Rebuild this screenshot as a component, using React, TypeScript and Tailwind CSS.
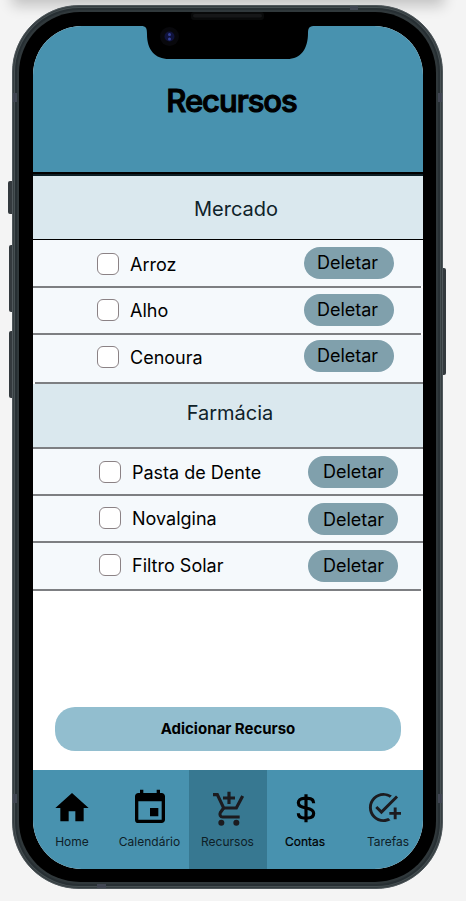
import { MdHome, MdEvent, MdAddTask } from "react-icons/md";
import type { ReactNode } from "react";

type RowProps = { label: string; height: string; offset: string; check: string; text: string; button: string; buttonText: string };

function Row({ label, height, offset, check, text, button, buttonText }: RowProps) {
  return (
    <div className={`flex items-start bg-[#f5f9fc] ${height} ${offset}`}>
      <span className={`h-[22px] w-[22px] shrink-0 rounded-[6px] border border-[#8b8285] bg-white ${check}`} />
      <span className={`ml-[11px] flex-1 whitespace-nowrap text-[18px] leading-[22px] ${text}`}>{label}</span>
      <button className={`h-8 w-[90px] shrink-0 rounded-full bg-[#80a0ac] text-[18px] leading-[22px] ${button} ${buttonText}`}>
        Deletar
      </button>
    </div>
  );
}

function Line({ inset = "" }: { inset?: string }) {
  return <div className={`h-[2px] ${inset}`}><div className="h-full bg-[#7d7f82]" /></div>;
}

function CartPlus() {
  return (
    <svg className="h-10 w-[46px]" viewBox="0 14 138 120" fill="none" stroke="#1c1b1f" strokeWidth="9.500">
      <path d="M24 34H37L56 74H94L113 38" />
      <path d="M56 74L46 88C43 94 46 101 53 101H104" />
      <path d="M54 44H90M72 25V62" />
      <circle cx="49" cy="118" r="9" fill="#1c1b1f" stroke="none" />
      <circle cx="94" cy="118" r="9" fill="#1c1b1f" stroke="none" />
    </svg>
  );
}

function Dollar() {
  return (
    <svg className="h-10 w-8" viewBox="0 20 96 120" fill="none" stroke="#000" strokeWidth="9.500">
      <path d="M48 39V123" />
      <path d="M71 66C71 55 64 51 54 51H42C31 51 25 57 25 64C25 74 33 77 48 80C64 83 71 87 71 96C71 105 64 110 54 110H42C31 110 25 105 25 96" />
    </svg>
  );
}

function Tab({ icon, label, active, labelClass = "text-[#0e2027]" }: { icon: ReactNode; label: string; active?: boolean; labelClass?: string }) {
  return (
    <div className={`flex w-[78px] shrink-0 flex-col items-center pt-[18px] text-[12px] leading-[15px] ${active ? "bg-[#377891]" : ""}`}>
      <div className="flex h-10 items-center justify-center">{icon}</div>
      <span className={`mt-[6px] whitespace-nowrap ${labelClass}`}>{label}</span>
    </div>
  );
}

export default function App() {
  return (
    <div className="relative h-[901px] w-[466px] overflow-hidden bg-[#f4f4f4] font-['Inter',sans-serif] text-black">
      <div className="absolute -top-5 left-4 h-5 w-[424px] shadow-[0_2px_14px_4px_rgba(0,0,0,0.2)]" />
      <div className="absolute left-2 top-[181px] h-[33px] w-2 rounded-l-[2px] bg-[#343a3e]" />
      <div className="absolute left-[9px] top-[245px] h-[67px] w-2 rounded-l-[2px] bg-[#343a3e]" />
      <div className="absolute left-[9px] top-[331px] h-[67px] w-2 rounded-l-[2px] bg-[#343a3e]" />
      <div className="absolute left-[440px] top-[268px] h-[107px] w-[6px] rounded-r-[2px] bg-[#343a3e]" />
      <div className="relative ml-3 h-[901px] w-[431px] pt-[5px]">
        <div className="relative h-[884px] rounded-[67px] border border-[#4f575b] bg-[#30383b] p-[6px] shadow-[inset_0_0_0_1px_#353d40,inset_0_0_0_2px_#464f52,inset_0_0_0_4px_#272f33]">
          <div className="h-[870px] w-[417px] rounded-[61px] bg-black py-[14px] pl-[14px] pr-[13px]">
            <div className="flex h-[843px] w-[390px] flex-col overflow-hidden rounded-[49px] bg-white">
              <header className="h-[146px] shrink-0 bg-[#4892af] pt-[55px] text-center">
                <h1 className="ml-[7px] text-[31px] font-medium leading-[39px] tracking-[-1px] [-webkit-text-stroke:1.1px_black]">Recursos</h1>
              </header>
              <div className="h-[4px] shrink-0 border-t-2 border-black bg-[#0c1f26]" />
              <h2 className="h-[63px] shrink-0 bg-[#dae8ee] pl-4 pt-[21px] text-center text-[20px] leading-[24px] text-[#0f2229]">Mercado</h2>
              <div className="h-px shrink-0 bg-black" />
              <Row label="Arroz" height="h-[46px]" offset="pl-16 pr-[29px]" check="mt-[13px]" text="mt-[14px]" button="mt-[7px]" buttonText="pr-[3px]" />
              <Line inset="pr-[2px]" />
              <Row label="Alho" height="h-[45px]" offset="pl-16 pr-[29px]" check="mt-[11px]" text="mt-[12px]" button="mt-[6px]" buttonText="pr-[3px]" />
              <Line inset="pr-[2px]" />
              <Row label="Cenoura" height="h-[47px]" offset="pl-16 pr-[29px]" check="mt-[11px]" text="mt-[12px]" button="mt-[5px]" buttonText="pr-[3px]" />
              <Line inset="pl-[2px]" />
              <h2 className="h-[63px] shrink-0 bg-[#dae8ee] pl-1 pt-[17px] text-center text-[20px] leading-[24px] text-[#0f2229]">Farmácia</h2>
              <Line />
              <Row label="Pasta de Dente" height="h-[45px]" offset="pl-[66px] pr-[25px]" check="mt-[12px]" text="mt-[13px]" button="mt-[7px]" buttonText="pl-px" />
              <Line />
              <Row label="Novalgina" height="h-[45px]" offset="pl-[66px] pr-[25px]" check="mt-[11px]" text="mt-[12px]" button="mt-[7px]" buttonText="pl-px pt-[2px]" />
              <Line />
              <Row label="Filtro Solar" height="h-[46px]" offset="pl-[66px] pr-[25px]" check="mt-[11px]" text="mt-[12px]" button="mt-[7px]" buttonText="pl-px" />
              <Line inset="pr-[2px]" />
              <button className="ml-[22px] mt-[116px] h-11 w-[346px] shrink-0 rounded-[20px] bg-[#92becf] text-[15px] font-bold">Adicionar Recurso</button>
              <nav className="mt-[19px] flex h-[99px] shrink-0 bg-[#4892af]">
                <Tab icon={<MdHome size={40} />} label="Home" />
                <Tab icon={<MdEvent size={40} />} label="Calendário" labelClass="mr-px text-[#0e2027]" />
                <Tab active icon={<CartPlus />} label="Recursos" labelClass="mr-px text-[#0e2027]" />
                <Tab icon={<Dollar />} label="Contas" labelClass="mr-[2px] text-black [-webkit-text-stroke:0.2px_black]" />
                <Tab icon={<MdAddTask className="mr-px -mt-px" size={35} color="#1c1b1f" />} label="Tarefas" labelClass="ml-2 text-[#0e2027]" />
              </nav>
            </div>
          </div>
          <svg className="absolute left-[128px] top-[6px] h-[48px] w-[174px]" viewBox="0 0 174 48">
            <path d="M0 0H174V14C169 14 167 15 167 21C167 37 160 47 146 47H28C14 47 6 38 6 22C6 16 5 14 0 14Z" fill="#000" />
          </svg>
        </div>
      </div>
      <svg className="absolute left-0 top-0 h-[901px] w-[466px]" viewBox="0 0 466 901">
        <g fill="#414652">
          <rect x="13" y="93" width="4" height="9" />
          <rect x="438" y="93" width="4" height="9" />
          <rect x="350" y="6" width="8" height="4" />
          <rect x="13" y="794" width="4" height="9" />
          <rect x="438" y="794" width="4" height="9" />
          <rect x="97" y="884" width="9" height="4" />
        </g>
        <rect x="191" y="12" width="73" height="8" rx="3" fill="#090a0a" />
        <rect x="193" y="14" width="69" height="3.500" rx="1.700" fill="#161718" />
        <circle cx="169.500" cy="36.500" r="9.500" fill="#08080c" />
        <circle cx="169.500" cy="36.500" r="5" fill="#10133c" />
        <circle cx="169.500" cy="34.500" r="1.500" fill="#35439a" />
        <circle cx="169.500" cy="39" r="1.500" fill="#35439a" />
      </svg>
    </div>
  );
}
